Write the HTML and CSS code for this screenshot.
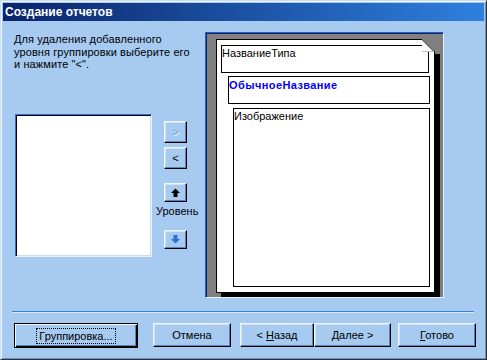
FILE: index.html
```html
<!DOCTYPE html>
<html lang="ru">
<head>
    <meta charset="UTF-8">
    <title>Создание отчетов</title>
    <link rel="stylesheet" href="styles.css">
</head>
<body>
    <div class="window">
        <div class="titlebar">Создание отчетов</div>

        <div class="main">
            <div class="left">
                <p class="intro">Для удаления добавленного<br>уровня группировки выберите его<br>и нажмите "&lt;".</p>
                <div class="list-row">
                    <div class="listbox"></div>
                    <div class="side">
                        <button class="btn side-btn disabled">&gt;</button>
                        <button class="btn side-btn gap-small">&lt;</button>
                        <button class="btn side-btn arrow gap-big">
                            <svg width="9" height="9" viewBox="0 0 9 9"><polygon points="4.5,0.5 9,5 6.5,5 6.5,9 2.5,9 2.5,5 0,5" fill="#000"/></svg>
                        </button>
                        <span class="level">Уровень</span>
                        <button class="btn side-btn arrow">
                            <svg width="9" height="9" viewBox="0 0 9 9"><polygon points="4.5,8.5 9,4 6.5,4 6.5,0 2.5,0 2.5,4 0,4" fill="#2d6fd8"/></svg>
                        </button>
                    </div>
                </div>
            </div>

            <div class="preview">
                <div class="page">
                    <svg class="fold" width="19" height="15" viewBox="0 0 19 15">
                        <polygon points="1,0 19,0 19,15 14,15 14,13" fill="#808080"/>
                        <polygon points="1,0 13,12 1,12" fill="#fff"/>
                        <line x1="1" y1="0.5" x2="13.5" y2="13" stroke="#000" stroke-width="1"/>
                        <line x1="1" y1="12.5" x2="13" y2="12.5" stroke="#c0c0c0" stroke-width="1"/>
                    </svg>
                    <div class="field f-type">НазваниеТипа</div>
                    <div class="field f-name">ОбычноеНазвание</div>
                    <div class="field f-image">Изображение</div>
                </div>
            </div>
        </div>

        <div class="separator"></div>

        <div class="actions">
            <button class="btn default"><span class="focus">Группировка...</span></button>
            <button class="btn cancel">Отмена</button>
            <button class="btn back">&lt; <u>Н</u>азад</button>
            <button class="btn next"><u>Д</u>алее &gt;</button>
            <button class="btn finish"><u>Г</u>отово</button>
        </div>
    </div>
</body>
</html>
```

FILE: styles.css
```css
body {
    margin: 0;
    font-family: 'Liberation Sans', Arial, sans-serif;
    font-size: 11px;
    color: #000;
}
.window {
    width: 487px;
    height: 360px;
    box-sizing: border-box;
    background-color: #a6caf0;
    border: 1px solid;
    border-color: #c8def6 #303030 #303030 #c8def6;
    box-shadow: inset 1px 1px #f0f6fe, inset -1px -1px #6d8fbf;
    padding: 2px;
}
.titlebar {
    height: 18px;
    line-height: 18px;
    padding-left: 2px;
    background: linear-gradient(to right, #0a246a, #2e80de);
    color: #fff;
    font-weight: bold;
    font-size: 12px;
}
.main {
    display: flex;
    padding: 11px 0 0 11px;
}
.left {
    width: 191px;
}
.intro {
    margin: 0;
    height: 82px;
    line-height: 12.5px;
    padding-top: 1px;
    box-sizing: border-box;
    letter-spacing: 0.1px;
}
.list-row {
    display: flex;
}
.listbox {
    width: 137px;
    height: 143px;
    margin-left: 1px;
    box-sizing: border-box;
    background: #fff;
    border: 1px solid;
    border-color: #2e6fd0 #eaf3fd #eaf3fd #2e6fd0;
    box-shadow: inset 1px 1px #000, inset -1px -1px #c8dcf4;
}
.side {
    display: flex;
    flex-direction: column;
    align-items: flex-start;
    margin-left: 4px;
    padding-top: 7px;
}
.btn {
    font-family: 'Liberation Sans', Arial, sans-serif;
    font-size: 11px;
    color: #000;
    background-color: #a6caf0;
    border: 1px solid;
    border-color: #eef5fd #000 #000 #eef5fd;
    box-shadow: inset -1px -1px #5f83b8, inset 1px 1px #cfe2f8;
    padding: 0;
    margin: 0;
    height: 24px;
    box-sizing: border-box;
}
.side-btn {
    width: 23px;
    height: 22px;
    margin-left: 8px;
    line-height: 18px;
}
.side-btn.disabled {
    color: #7a9ed8;
    text-shadow: 1px 1px #e8f2fc;
}
.gap-small {
    margin-top: 4px;
}
.gap-big {
    margin-top: 14px;
}
.arrow {
    height: 19px;
    display: flex;
    align-items: center;
    justify-content: center;
}
.level {
    display: block;
    line-height: 13px;
    margin: 3px 0 12px;
}
.preview {
    width: 239px;
    height: 266px;
    box-sizing: border-box;
    background: #808080;
    border: 1px solid;
    border-color: #2a5cc0 #e8f2fc #e8f2fc #2a5cc0;
    box-shadow: inset 1px 1px #0a246a;
    padding: 6px 0 0 10px;
}
.page {
    position: relative;
    width: 219px;
    height: 254px;
    box-sizing: border-box;
    background: #fff;
    border: 1px solid #000;
    box-shadow: 5px 4px 0 #000;
    padding: 5px 0 0 4px;
}
.fold {
    position: absolute;
    top: -1px;
    right: -6px;
}
.field {
    box-sizing: border-box;
    border: 1px solid #000;
    line-height: 13px;
    padding: 1px 0 0 0;
}
.f-type {
    width: 208px;
    height: 28px;
}
.f-name {
    width: 202px;
    height: 28px;
    margin: 3px 0 0 7px;
    color: #0000ff;
    font-weight: bold;
    padding-top: 2px;
    letter-spacing: 0.4px;
}
.f-image {
    width: 197px;
    height: 179px;
    margin: 4px 0 0 12px;
    padding-top: 1px;
}
.separator {
    margin: 13px 10px 0 9px;
    border-top: 1px solid #3a82e0;
    border-bottom: 1px solid #d6e8fb;
}
.actions {
    display: flex;
    align-items: flex-start;
    padding: 10px 0 0 11px;
}
.default {
    width: 124px;
    height: 25px;
    border-color: #000;
    box-shadow: inset 1px 1px #eef5fd, inset -1px -1px #000, inset -2px -2px #5f83b8;
}
.focus {
    border: 1px dotted #000;
    padding: 1px 2px;
}
.cancel {
    width: 78px;
    margin-left: 15px;
}
.back {
    width: 74px;
    margin-left: 9px;
}
.next {
    width: 77px;
}
.finish {
    width: 78px;
    margin-left: 7px;
}
```
